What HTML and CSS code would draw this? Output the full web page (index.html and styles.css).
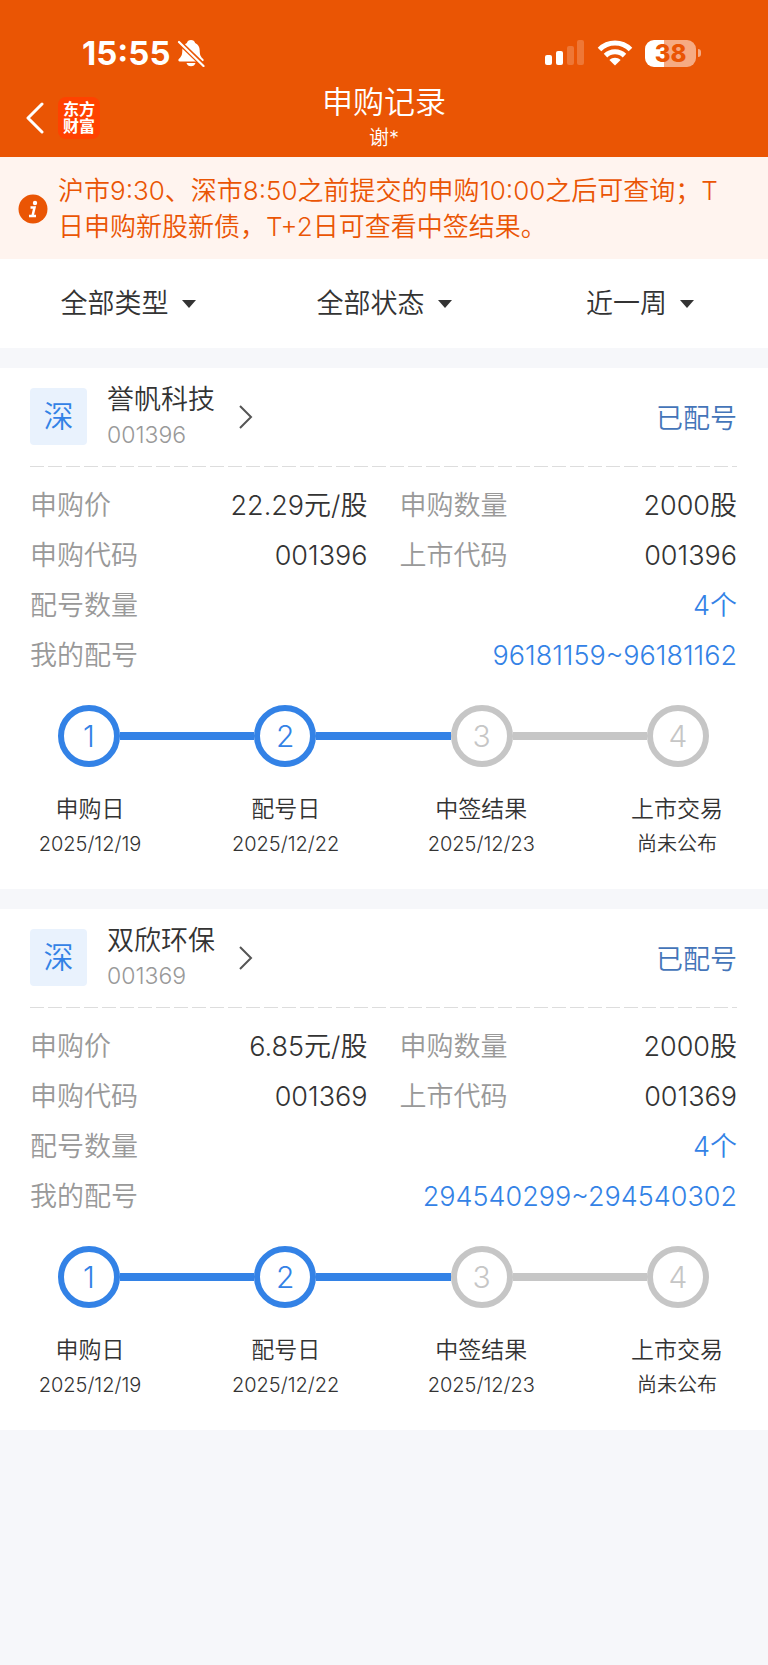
FILE: index.html
```html
<!DOCTYPE html>
<html lang="zh-CN">
<head>
    <meta charset="UTF-8">
    <meta name="viewport" content="width=device-width, initial-scale=1.0">
    <title>申购记录</title>
    <link rel="stylesheet" href="styles.css">
</head>
<body>
    <header class="header">
        <!-- Status bar -->
        <div class="status-bar">
            <div class="status-left">
                <span class="time">15:55</span>
                <svg class="bell" viewBox="0 0 28 28" width="28" height="28">
                    <path d="M14 1c-2.200 0-3.700 1.300-4.100 3C6.800 5.300 5.300 8 5.300 11.500c0 4.500-1.200 6.500-3.500 8.500-.9.900-.5 2.500 1 2.500h22.400c1.500 0 1.900-1.600 1-2.500-2.300-2-3.500-4-3.500-8.500C22.700 8 21.200 5.300 18.100 4c-.4-1.700-1.900-3-4.100-3z" fill="#fff"/>
                    <path d="M9.500 24h9c-.5 2-2.300 3.300-4.500 3.300S10 26 9.500 24z" fill="#fff"/>
                    <path d="M1 2l26 25" stroke="#ea5504" stroke-width="5"/>
                    <path d="M2 3l24.500 24" stroke="#fff" stroke-width="2.200" stroke-linecap="round"/>
                </svg>
            </div>
            <div class="status-right">
                <svg viewBox="0 0 40 26" width="40" height="26">
                    <rect x="0" y="15" width="7" height="10" rx="2" fill="#fff"/>
                    <rect x="11" y="11" width="7" height="14" rx="2" fill="#fff"/>
                    <rect x="22" y="6" width="7" height="19" rx="2" fill="#fff" opacity=".2"/>
                    <rect x="32" y="0" width="7" height="25" rx="2" fill="#fff" opacity=".2"/>
                </svg>
                <svg viewBox="0 0 36 26" width="36" height="26">
                    <g fill="none" stroke="#fff" stroke-width="5">
                        <path d="M2.500 9.500C11 .9 25 .9 33.500 9.500"/>
                        <path d="M8.500 15.600c5.300-5.200 13.700-5.200 19 0"/>
                    </g>
                    <path d="M18 25.500l-5.600-5.600c3.200-2.900 8-2.900 11.200 0z" fill="#fff"/>
                </svg>
                <div class="battery"><span class="battery-level">38</span><i class="battery-tip"></i></div>
            </div>
        </div>

        <!-- Navigation -->
        <div class="nav">
            <div class="nav-left">
                <button class="back" type="button" aria-label="返回">
                    <svg viewBox="0 0 18 32" width="18" height="32">
                        <path d="M16 2L2 16l14 14" fill="none" stroke="#fff" stroke-width="3" stroke-linecap="round" stroke-linejoin="round"/>
                    </svg>
                </button>
                <a class="logo" href="#">东方<br>财富</a>
            </div>
            <div class="nav-title">
                <h1>申购记录</h1>
                <p>谢*</p>
            </div>
        </div>
    </header>

    <div class="notice">
        <svg class="notice-icon" viewBox="0 0 30 30" width="30" height="30">
            <circle cx="15" cy="15" r="14.500" fill="#ea5504"/>
            <circle cx="17" cy="9" r="2.200" fill="#fff"/>
            <path d="M12.500 13.500h4l-2 8.500M11 22h7" fill="none" stroke="#fff" stroke-width="2.500"/>
        </svg>
        <p>沪市9:30、深市8:50之前提交的申购10:00之后可查询；T日申购新股新债，T+2日可查看中签结果。</p>
    </div>

    <!-- Filters -->
    <form class="filters">
        <label class="filter">
            <select name="type" aria-label="类型"><option>全部类型</option></select>
        </label>
        <label class="filter">
            <select name="status" aria-label="状态"><option>全部状态</option></select>
        </label>
        <label class="filter">
            <select name="period" aria-label="时间"><option>近一周</option></select>
        </label>
    </form>

    <main>
        <section class="card">
            <div class="card-header">
                <span class="market">深</span>
                <a class="stock" href="#">
                    <span class="stock-text">
                        <span class="stock-name">誉帆科技</span>
                        <span class="stock-code">001396</span>
                    </span>
                    <svg viewBox="0 0 14 24" width="14" height="24">
                        <path d="M1 1l11 11L1 23" fill="none" stroke="#555" stroke-width="2"/>
                    </svg>
                </a>
                <span class="state">已配号</span>
            </div>
            <dl class="details">
                <div class="row"><dt>申购价</dt><dd>22.29元/股</dd></div>
                <div class="row"><dt>申购数量</dt><dd>2000股</dd></div>
                <div class="row"><dt>申购代码</dt><dd>001396</dd></div>
                <div class="row"><dt>上市代码</dt><dd>001396</dd></div>
                <div class="row wide"><dt>配号数量</dt><dd>4个</dd></div>
                <div class="row wide"><dt>我的配号</dt><dd>96181159~96181162</dd></div>
            </dl>
            <div class="track">
                <span class="dot done">1</span>
                <i class="line done"></i>
                <span class="dot done">2</span>
                <i class="line done"></i>
                <span class="dot">3</span>
                <i class="line"></i>
                <span class="dot">4</span>
            </div>
            <ol class="steps">
                <li><strong>申购日</strong><span>2025/12/19</span></li>
                <li><strong>配号日</strong><span>2025/12/22</span></li>
                <li><strong>中签结果</strong><span>2025/12/23</span></li>
                <li><strong>上市交易</strong><span>尚未公布</span></li>
            </ol>
        </section>

        <section class="card">
            <div class="card-header">
                <span class="market">深</span>
                <a class="stock" href="#">
                    <span class="stock-text">
                        <span class="stock-name">双欣环保</span>
                        <span class="stock-code">001369</span>
                    </span>
                    <svg viewBox="0 0 14 24" width="14" height="24">
                        <path d="M1 1l11 11L1 23" fill="none" stroke="#555" stroke-width="2"/>
                    </svg>
                </a>
                <span class="state">已配号</span>
            </div>
            <dl class="details">
                <div class="row"><dt>申购价</dt><dd>6.85元/股</dd></div>
                <div class="row"><dt>申购数量</dt><dd>2000股</dd></div>
                <div class="row"><dt>申购代码</dt><dd>001369</dd></div>
                <div class="row"><dt>上市代码</dt><dd>001369</dd></div>
                <div class="row wide"><dt>配号数量</dt><dd>4个</dd></div>
                <div class="row wide"><dt>我的配号</dt><dd>294540299~294540302</dd></div>
            </dl>
            <div class="track">
                <span class="dot done">1</span>
                <i class="line done"></i>
                <span class="dot done">2</span>
                <i class="line done"></i>
                <span class="dot">3</span>
                <i class="line"></i>
                <span class="dot">4</span>
            </div>
            <ol class="steps">
                <li><strong>申购日</strong><span>2025/12/19</span></li>
                <li><strong>配号日</strong><span>2025/12/22</span></li>
                <li><strong>中签结果</strong><span>2025/12/23</span></li>
                <li><strong>上市交易</strong><span>尚未公布</span></li>
            </ol>
        </section>
    </main>
</body>
</html>
```
FILE: styles.css
```css
* {
    box-sizing: border-box;
    margin: 0;
    padding: 0;
}
body {
    font-family: Inter, "Noto Sans CJK SC", sans-serif;
    font-size: 27px;
    font-weight: 350;
    color: #333;
    background-color: #f6f7fa;
}
a {
    color: inherit;
    text-decoration: none;
}

/* Header */
.header {
    background-color: #ea5504;
    color: #fff;
    padding: 33px 0 4px;
}
.status-bar {
    display: flex;
    justify-content: space-between;
    align-items: center;
    height: 40px;
    padding: 0 67px 0 82px;
}
.status-left {
    display: flex;
    align-items: center;
    gap: 6px;
}
.status-right {
    display: flex;
    align-items: center;
    gap: 12px;
}
.time {
    font-size: 33px;
    font-weight: 700;
    line-height: 40px;
}
.battery {
    display: flex;
    align-items: center;
    gap: 2px;
}
.battery-level {
    width: 51px;
    border-radius: 9px;
    background: linear-gradient(to right, #fff 38%, #f6ab83 38%);
    color: #ea5504;
    font-size: 24px;
    font-weight: 800;
    line-height: 27px;
    text-align: center;
}
.battery-tip {
    width: 3px;
    height: 8px;
    border-radius: 0 4px 4px 0;
    background-color: #f6ab83;
}
.nav {
    display: grid;
    grid-template-columns: 1fr auto 1fr;
    align-items: end;
    padding: 7px 26px 0;
}
.nav-left {
    display: flex;
    align-items: center;
    gap: 14px;
    padding-bottom: 14px;
}
.back {
    display: flex;
    border: none;
    background: none;
    cursor: pointer;
}
.logo {
    width: 42px;
    padding: 4px 0;
    border-radius: 8px;
    background-color: #ff4200;
    font-size: 16px;
    font-weight: 700;
    line-height: 17px;
    text-align: center;
}
.nav-title {
    text-align: center;
}
.nav-title h1 {
    font-size: 31px;
    font-weight: 350;
    line-height: 44px;
}
.nav-title p {
    font-size: 20px;
    line-height: 29px;
}

/* Notice */
.notice {
    display: flex;
    align-items: center;
    gap: 10px;
    padding: 16px 26px 14px 18px;
    background-color: #fff4ef;
    color: #ea5504;
    font-size: 26px;
    line-height: 36px;
}
.notice-icon {
    flex: none;
}

/* Filters */
.filters {
    display: grid;
    grid-template-columns: repeat(3, 1fr);
    height: 89px;
    background-color: #fff;
}
.filter {
    display: flex;
    justify-content: center;
    align-items: center;
    gap: 13px;
}
.filter::after {
    content: "";
    border: 7px solid transparent;
    border-top: 8px solid #333;
    border-bottom: none;
}
.filter select {
    appearance: none;
    border: none;
    background: none;
    color: inherit;
    font: inherit;
    line-height: 40px;
}

/* Cards */
.card {
    margin-top: 20px;
    padding: 20px 31px 27px 30px;
    background-color: #fff;
}
.card-header {
    display: flex;
    align-items: center;
    padding-bottom: 22px;
    background: repeating-linear-gradient(to right, #ddd 0 14px, transparent 14px 18px) left bottom / 100% 1px no-repeat;
}
.market {
    width: 57px;
    border-radius: 4px;
    background-color: #e9f2fd;
    color: #3382e6;
    font-size: 30px;
    line-height: 57px;
    text-align: center;
}
.stock {
    display: flex;
    align-items: center;
    gap: 24px;
    margin-left: 20px;
}
.stock-text {
    display: flex;
    flex-direction: column;
    height: 57px;
    justify-content: center;
}
.stock-name {
    line-height: 36px;
}
.stock-code {
    color: #999;
    font-size: 23px;
    line-height: 34px;
}
.state {
    margin-left: auto;
    color: #4475b9;
}
.details {
    display: grid;
    grid-template-columns: 1fr 1fr;
    column-gap: 32px;
    padding-top: 14px;
}
.row {
    display: flex;
    justify-content: space-between;
    line-height: 50px;
}
.row dt {
    color: #999;
}
.wide {
    grid-column: 1 / -1;
}
.wide dd {
    color: #3382e6;
}

/* Progress */
.track {
    display: flex;
    align-items: center;
    padding: 24px 28px 0;
}
.dot {
    width: 62px;
    border: 6px solid #c6c6c6;
    border-radius: 50%;
    color: #c6c6c6;
    font-size: 30px;
    line-height: 50px;
    text-align: center;
}
.line {
    flex: 1;
    height: 8px;
    background-color: #c6c6c6;
}
.dot.done {
    border-color: #3382e6;
    color: #3382e6;
}
.line.done {
    background-color: #3382e6;
}
.steps {
    display: flex;
    justify-content: space-between;
    padding-top: 24px;
    list-style: none;
}
.steps li {
    display: flex;
    flex-direction: column;
    width: 120px;
    text-align: center;
}
.steps strong {
    font-size: 23px;
    font-weight: 350;
    line-height: 36px;
}
.steps span {
    font-size: 20px;
    line-height: 35px;
}
```
